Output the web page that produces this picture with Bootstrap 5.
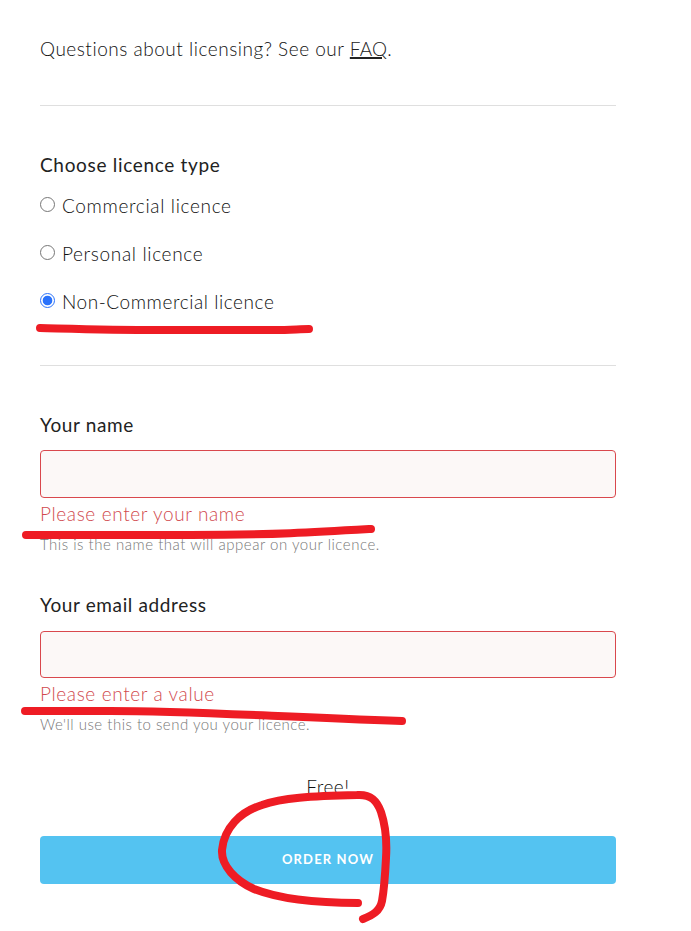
<!DOCTYPE html>
<html lang="en">
<head>
<meta charset="utf-8">
<meta name="viewport" content="width=device-width, initial-scale=1">
<title>Order licence</title>
<link href="https://cdn.jsdelivr.net/npm/bootstrap@5.3.0/dist/css/bootstrap.min.css" rel="stylesheet">
<style>
body { font-family: "Lato", "Open Sans", sans-serif; font-weight: 300; font-size: 19px; line-height: 24px; letter-spacing: .52px; color: #111; background: #fff; }
main { height: 931px; overflow: hidden; }
.order-form { width: 576px; margin-left: 40px; padding-top: 37px; }
.rule { height: 1px; background: #dfdfdf; }
.intro-rule { margin-top: 44px; }
.licence-types { margin-top: 47px; }
.options { padding-top: 17px; }
.types-rule { margin-top: 27px; }
.name-group { margin-top: 47px; }
.email-group { margin-top: 37px; }
.heading { font-size: 19px; font-weight: 400; line-height: 24px; letter-spacing: .68px; color: #222; }
.name-group .heading, .email-group .heading { letter-spacing: .63px; }
.faq { color: #222; text-decoration: underline; text-decoration-thickness: 2px; text-underline-offset: 1px; letter-spacing: .2px; }
.option { gap: 7px; height: 24px; margin-bottom: 24px; letter-spacing: .65px; }
.option:last-child { letter-spacing: .56px; }
.option .form-check-input { width: 15px; height: 15px; margin: 3px 0 0; border: 1px solid #767676; background: #fff; box-shadow: none; flex: none; }
.option .form-check-input:checked { border-color: #2a72fb; background: radial-gradient(circle, #2a72fb 4.4px, #fff 5.2px); }
.field-input { height: 48px; margin-top: 13px; border: 1px solid #d9484d; border-radius: 4px; background: #fcf8f7; }
.email-group .field-input { height: 47px; margin-top: 14px; }
.error-text { margin-top: 4px; color: #d14a4e; letter-spacing: .62px; }
.help-text { margin-top: 6px; font-size: 15px; color: #777; letter-spacing: .53px; }
.email-group .help-text { letter-spacing: .5px; }
.price { margin-top: 39px; }
.order-btn { height: 48px; margin-top: 37px; background: #54c3f1; color: #fff; font-size: 13px; font-weight: 700; letter-spacing: 1.15px; border: 0; border-radius: 4px; }
.marker { left: 0; top: 0; pointer-events: none; }
</style>
</head>
<body>
<main class="position-relative">
<form class="order-form d-flex flex-column">
  <p class="mb-0">Questions about licensing? See our <a class="faq" href="#">FAQ</a>.</p>
  <div class="rule intro-rule"></div>
  <fieldset class="licence-types">
    <legend class="heading mb-0">Choose licence type</legend>
    <div class="options">
      <label class="option d-flex"><input class="form-check-input" type="radio" name="licence"><span>Commercial licence</span></label>
      <label class="option d-flex"><input class="form-check-input" type="radio" name="licence"><span>Personal licence</span></label>
      <label class="option d-flex"><input class="form-check-input" type="radio" name="licence" checked><span>Non-Commercial licence</span></label>
    </div>
  </fieldset>
  <div class="rule types-rule"></div>
  <div class="name-group">
    <label class="heading d-block" for="name">Your name</label>
    <input id="name" class="form-control field-input" type="text">
    <div class="error-text">Please enter your name</div>
    <div class="help-text">This is the name that will appear on your licence.</div>
  </div>
  <div class="email-group">
    <label class="heading d-block" for="email">Your email address</label>
    <input id="email" class="form-control field-input" type="email">
    <div class="error-text">Please enter a value</div>
    <div class="help-text">We'll use this to send you your licence.</div>
  </div>
  <div class="price text-center">Free!</div>
  <button type="button" class="btn order-btn w-100">ORDER NOW</button>
</form>
<svg class="marker position-absolute" width="691" height="931" viewBox="0 0 691 931" fill="none" stroke="#ee1c24" stroke-width="8" stroke-linecap="round" stroke-linejoin="round" aria-hidden="true">
  <path d="M40 328C80 329 110 330 160 330H275C290 330 300 329 309 329"/>
  <path d="M26 535H190C270 535 320 532 371 529"/>
  <path d="M25 711H110C190 711 260 716 402 721"/>
  <path d="M358 903C312 903 279 899 254 889C236 881 221 866 222 850C224 828 240 812 262 805C282 798 310 796 357 795C371 794 377 801 381 812C386 827 387 842 386 858C385 878 384 890 382 901C380 911 373 915 363 919"/>
</svg>
</main>
<script src="https://cdn.jsdelivr.net/npm/bootstrap@5.3.0/dist/js/bootstrap.bundle.min.js"></script>
</body>
</html>
